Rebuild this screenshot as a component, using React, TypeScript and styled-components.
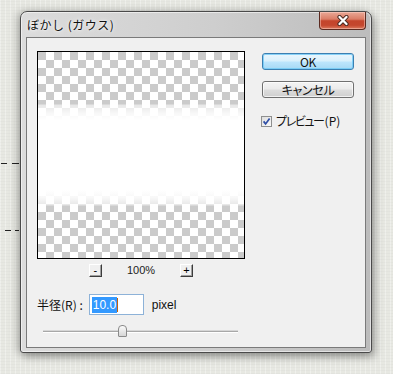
import React from 'react';
import styled, { createGlobalStyle } from 'styled-components';

const Global = createGlobalStyle`
  html, body { margin: 0; padding: 0; }
  body {
    background: #e7e8e2;
    font-family: "Noto Sans CJK JP", "Noto Sans", sans-serif;
    color: #111;
  }
`;

const Page = styled.div`
  position: relative;
  width: 393px;
  height: 374px;
  overflow: hidden;
  box-sizing: border-box;
  padding: 11px 0 0 20px;
  background-color: #e7e8e2;
  background-image:
    repeating-linear-gradient(0deg, rgba(0, 0, 0, 0.018) 0 1px, transparent 1px 3px),
    repeating-linear-gradient(90deg, rgba(255, 255, 255, 0.35) 0 1px, transparent 1px 5px);
`;

const Dash = styled.div<{ $top: number; $left: number; $w: number }>`
  position: absolute;
  top: ${(p) => p.$top}px;
  left: ${(p) => p.$left}px;
  width: ${(p) => p.$w}px;
  height: 1px;
  background: #222;
`;

const Window = styled.div`
  position: relative;
  width: 352px;
  height: 342px;
  box-sizing: border-box;
  border: 1px solid #4a4a4a;
  border-radius: 7px 7px 3px 3px;
  background: linear-gradient(to right, #dcdcdc 0%, #cecece 55%, #bcbcbc 100%);
  box-shadow:
    inset 0 0 0 1px rgba(255, 255, 255, 0.55),
    3px 4px 9px 0 rgba(0, 0, 0, 0.3),
    -3px 0 8px rgba(0, 0, 0, 0.22);
  display: flex;
  flex-direction: column;
  padding: 0 5px 4px;
`;

const TitleBar = styled.div`
  height: 25px;
  display: flex;
  align-items: flex-start;
  justify-content: space-between;
`;

const Title = styled.div`
  padding: 5px 0 0 1px;
  font-size: 12px;
  line-height: 16px;
  letter-spacing: 0.5px;
  color: #111;
  text-shadow: 0 0 5px rgba(255, 255, 255, 0.95), 0 0 2px rgba(255, 255, 255, 0.9);
`;

const CloseButton = styled.div`
  width: 47px;
  height: 18px;
  box-sizing: border-box;
  border: 1px solid #5b2a20;
  border-top: none;
  border-radius: 0 0 4px 4px;
  background: linear-gradient(
    to bottom,
    #eaa896 0%,
    #db7d66 42%,
    #c4452c 52%,
    #c4472e 78%,
    #dc7a5e 100%
  );
  box-shadow: inset 0 0 0 1px rgba(255, 220, 210, 0.45);
  display: flex;
  align-items: center;
  justify-content: center;
`;

const Client = styled.div`
  flex: 1;
  box-sizing: border-box;
  border: 1px solid #7a7a7a;
  background: #f0f0f0;
  display: flex;
  padding: 13px 11px 0 10px;
`;

const LeftCol = styled.div`
  width: 208px;
  display: flex;
  flex-direction: column;
`;

const Preview = styled.div`
  width: 208px;
  height: 208px;
  box-sizing: border-box;
  border: 1px solid #000;
  background-color: #fff;
  background-image:
    linear-gradient(
      to bottom,
      rgba(255, 255, 255, 0) 52px,
      rgba(255, 255, 255, 0.55) 53px,
      rgba(255, 255, 255, 0.85) 61px,
      #fff 68px,
      #fff 138px,
      rgba(255, 255, 255, 0.85) 146px,
      rgba(255, 255, 255, 0.55) 153px,
      rgba(255, 255, 255, 0) 154px
    ),
    conic-gradient(#fff 25%, #cbcbcb 0 50%, #fff 0 75%, #cbcbcb 0);
  background-size: 100% 100%, 16px 16px;
`;

const ZoomRow = styled.div`
  margin-top: 5px;
  height: 13px;
  display: flex;
  align-items: center;
  justify-content: center;
  gap: 25px;
`;

const SmallButton = styled.div`
  width: 13px;
  height: 13px;
  box-sizing: border-box;
  border: 1px solid;
  border-color: #ffffff #3c3c3c #3c3c3c #ffffff;
  box-shadow: inset -1px -1px 0 #a0a0a0;
  background: #f0f0f0;
  font-family: "Liberation Sans", sans-serif;
  font-size: 11px;
  line-height: 10px;
  text-align: center;
  color: #000;
`;

const ZoomText = styled.div`
  font-family: "Liberation Sans", sans-serif;
  font-size: 11px;
  line-height: 13px;
  color: #222;
`;

const RadiusRow = styled.div`
  margin-top: 17px;
  height: 21px;
  display: flex;
  align-items: center;
`;

const Label = styled.div`
  font-size: 12px;
  line-height: 16px;
  font-feature-settings: "palt";
  color: #111;
  margin-right: 6px;
  white-space: pre;
`;

const Input = styled.div`
  width: 55px;
  height: 21px;
  box-sizing: border-box;
  border: 1px solid #8db2d8;
  background: #fff;
  padding-left: 2px;
  display: flex;
  align-items: center;
`;

const Selected = styled.span`
  background: #3399ff;
  color: #fff;
  font-family: "Liberation Sans", sans-serif;
  font-size: 12px;
  line-height: 16px;
  padding: 0 1px;
`;

const Caret = styled.span`
  width: 1px;
  height: 14px;
  background: #c0600f;
`;

const Unit = styled.div`
  margin-left: 8px;
  font-family: "Liberation Sans", sans-serif;
  font-size: 12px;
  color: #111;
`;

const Slider = styled.div`
  position: relative;
  margin: 10px 0 0 6px;
  width: 195px;
  height: 12px;
  display: flex;
  align-items: center;
`;

const Track = styled.div`
  width: 100%;
  height: 1px;
  background: #a8a8a8;
  box-shadow: 0 1px 0 #ffffff, 0 -1px 0 #d6d6d6;
`;

const Thumb = styled.div`
  position: absolute;
  top: 0;
  width: 9px;
  height: 12px;
  box-sizing: border-box;
  border: 1px solid #8a8a8a;
  border-radius: 4px 4px 1px 1px;
  background: linear-gradient(to bottom, #fbfbfb, #d6d6d6);
`;

const RightCol = styled.div`
  margin-left: 17px;
  width: 92px;
  display: flex;
  flex-direction: column;
`;

const Button = styled.div<{ $default?: boolean; $mt: number }>`
  margin-top: ${(p) => p.$mt}px;
  height: 17px;
  box-sizing: border-box;
  border: 1px solid ${(p) => (p.$default ? '#3c7fb1' : '#707070')};
  border-radius: 3px;
  background: ${(p) =>
    p.$default
      ? 'linear-gradient(to bottom, #eaf6fd 0%, #d9f0fc 48%, #bee6fd 52%, #a7d9f5 100%)'
      : 'linear-gradient(to bottom, #f4f4f4 0%, #ebebeb 48%, #dddddd 52%, #cfcfcf 100%)'};
  box-shadow: inset 0 0 0 1px ${(p) => (p.$default ? 'rgba(110, 200, 245, 0.8)' : 'rgba(255,255,255,0.7)')};
  display: flex;
  align-items: center;
  justify-content: center;
  font-size: 12px;
  line-height: 15px;
  font-feature-settings: "palt";
  letter-spacing: -0.3px;
  color: #111;
`;

const CheckRow = styled.div`
  margin: 17px 0 0 -1px;
  height: 12px;
  display: flex;
  align-items: center;
  gap: 4px;
`;

const CheckLabel = styled.span`
  font-size: 12px;
  line-height: 14px;
  font-feature-settings: "palt";
  color: #111;
`;

const Kana = styled.span`
  letter-spacing: -1.4px;
  margin-right: 1px;
`;

const CloseIcon = () => (
  <svg width="14" height="11" viewBox="0 0 14 11">
    <path d="M3.5 2 L10.5 9 M10.5 2 L3.5 9" stroke="#4a2a22" strokeWidth="4.2" strokeLinecap="round" />
    <path d="M3.5 2 L10.5 9 M10.5 2 L3.5 9" stroke="#ffffff" strokeWidth="2.3" strokeLinecap="round" />
  </svg>
);

const CheckBox = () => (
  <svg width="11" height="11" viewBox="0 0 11 11">
    <defs>
      <linearGradient id="cbg" x1="0" y1="0" x2="1" y2="1">
        <stop offset="0" stopColor="#dcdcdc" />
        <stop offset="1" stopColor="#fbfbfb" />
      </linearGradient>
    </defs>
    <rect x="0.5" y="0.5" width="10" height="10" fill="url(#cbg)" stroke="#8e8f8f" />
    <path d="M2.6 5.4 L4.6 7.9 L8.6 2.4" fill="none" stroke="#2e4ea6" strokeWidth="1.7" />
  </svg>
);

export default function App() {
  const sliderValue = 0.385;
  return (
    <Page>
      <Global />
      <Dash $top={163} $left={1} $w={6} />
      <Dash $top={163} $left={12} $w={7} />
      <Dash $top={230} $left={5} $w={6} />
      <Dash $top={230} $left={15} $w={4} />
      <Window>
        <TitleBar>
          <Title>ぼかし (ガウス)</Title>
          <CloseButton>
            <CloseIcon />
          </CloseButton>
        </TitleBar>
        <Client>
          <LeftCol>
            <Preview />
            <ZoomRow>
              <SmallButton>-</SmallButton>
              <ZoomText>100%</ZoomText>
              <SmallButton>+</SmallButton>
            </ZoomRow>
            <RadiusRow>
              <Label>半径(R) :</Label>
              <Input>
                <Selected>10.0</Selected>
                <Caret />
              </Input>
              <Unit>pixel</Unit>
            </RadiusRow>
            <Slider>
              <Track />
              <Thumb style={{ left: `${sliderValue * 195}px` }} />
            </Slider>
          </LeftCol>
          <RightCol>
            <Button $default $mt={2}>OK</Button>
            <Button $mt={11}>キャンセル</Button>
            <CheckRow>
              <CheckBox />
              <CheckLabel>
                <Kana>プレビュー</Kana>(P)
              </CheckLabel>
            </CheckRow>
          </RightCol>
        </Client>
      </Window>
    </Page>
  );
}
